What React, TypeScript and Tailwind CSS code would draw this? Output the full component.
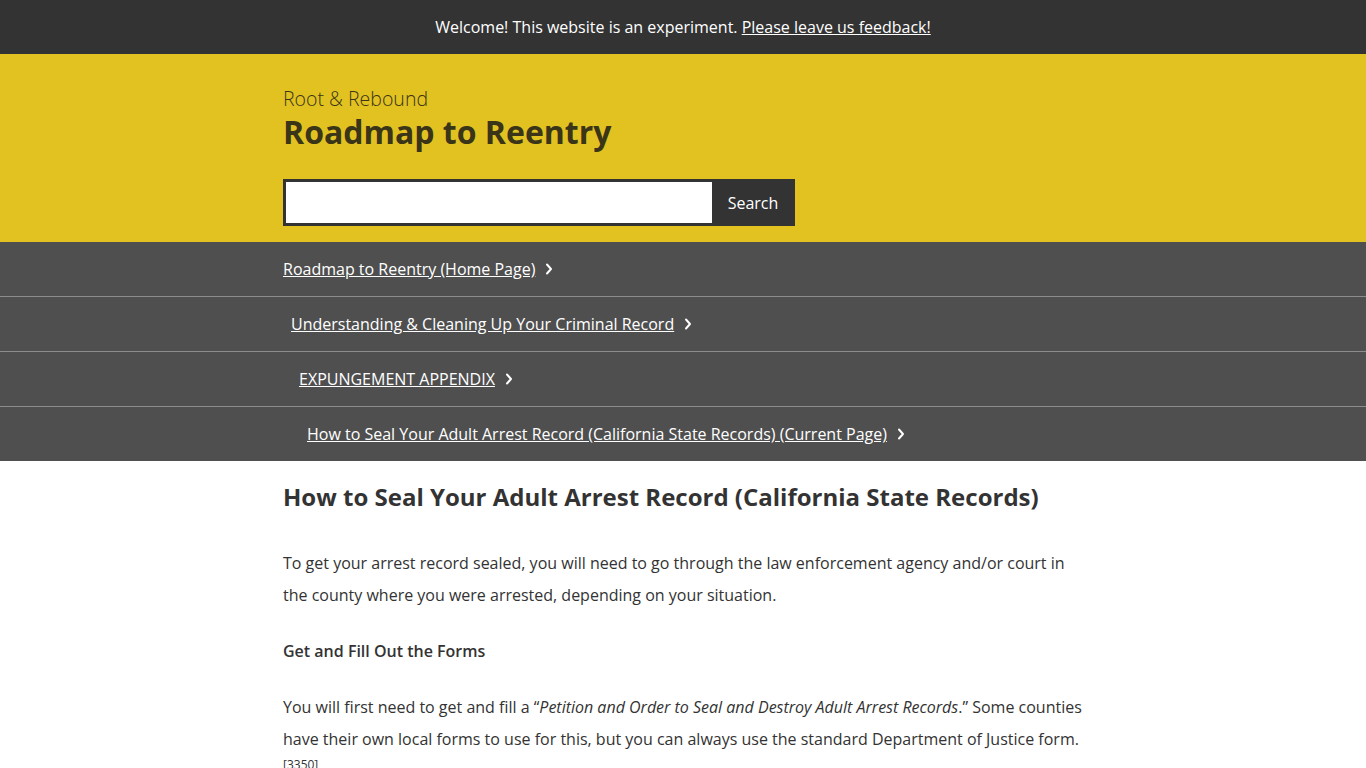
import React from "react";

function Chevron() {
  return (
    <svg width="8" height="12" viewBox="0 0 8 12" className="ml-[10px] inline-block" aria-hidden>
      <path d="M2 1.5 L6 6 L2 10.5" fill="none" stroke="#ffffff" strokeWidth="2" strokeLinecap="round" strokeLinejoin="round" />
    </svg>
  );
}

const crumbs = [
  "Roadmap to Reentry (Home Page)",
  "Understanding & Cleaning Up Your Criminal Record",
  "EXPUNGEMENT APPENDIX",
  "How to Seal Your Adult Arrest Record (California State Records) (Current Page)",
];
const indents = ["pl-0", "pl-[8px]", "pl-[16px]", "pl-[24px]"];

export default function App() {
  return (
    <div className="min-h-screen bg-white text-[#333333]" style={{ fontFamily: '"Open Sans", "Noto Sans", sans-serif' }}>
      <div className="h-[54px] bg-[#333333] flex items-center justify-center text-white text-[16px]">
        <span>
          Welcome! This website is an experiment.{" "}
          <a href="#" className="underline">Please leave us feedback!</a>
        </span>
      </div>
      <div className="bg-[#e2c221]">
        <div className="w-[800px] mx-auto pt-[32px] pb-[16px]">
          <div className="text-[19.5px] font-light leading-[26px] text-[#3a3418]">Root &amp; Rebound</div>
          <div className="text-[32px] font-bold leading-[40px] text-[#3a3418]">Roadmap to Reentry</div>
          <div className="mt-[27px] flex w-[512px] h-[47px] border-[3px] border-[#333333] bg-[#333333]">
            <input className="flex-1 bg-white outline-none px-2 text-[16px]" />
            <button className="w-[80px] pl-[2px] text-white text-[16px] bg-[#333333]">Search</button>
          </div>
        </div>
      </div>
      <div className="bg-[#4f4f4f]">
        {crumbs.map((c, i) => (
          <div key={i} className={"flex items-center " + (i > 0 ? "h-[55px] border-t border-[#8c8c8c]" : "h-[54px]")}>
            <div className={"w-[800px] mx-auto flex items-center " + indents[i]}>
              <a href="#" className="text-white underline text-[16px]">{c}</a>
              <Chevron />
            </div>
          </div>
        ))}
      </div>
      <div className="w-[800px] mx-auto pt-[18px] pb-10">
        <h1 className="text-[24px] font-bold leading-[36px] mb-[32px]">How to Seal Your Adult Arrest Record (California State Records)</h1>
        <p className="text-[16px] leading-[32px] mb-[24px]">
          To get your arrest record sealed, you will need to go through the law enforcement agency and/or court in the county where you were arrested, depending on your situation.
        </p>
        <p className="text-[16px] leading-[32px] mb-[24px] font-semibold">Get and Fill Out the Forms</p>
        <p className="text-[16px] leading-[32px] mb-[24px]">
          You will first need to get and fill a “<em>Petition and Order to Seal and Destroy Adult Arrest Records</em>.” Some counties have their own local forms to use for this, but you can always use the standard Department of Justice form.
          <br />
          <sup className="relative -top-[8px] text-[12px]">[3350]</sup>
        </p>
      </div>
    </div>
  );
}
